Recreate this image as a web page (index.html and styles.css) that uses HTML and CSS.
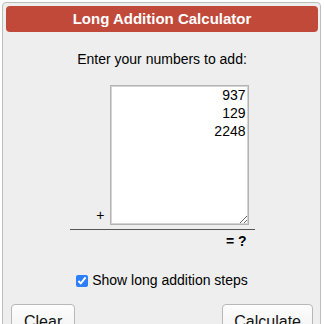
FILE: index.html
```html
<!DOCTYPE html>
<html>
<head>
<meta charset="utf-8">
<link rel="stylesheet" href="styles.css">
</head>
<body>
<div class="panel">
  <div class="header">Long Addition Calculator</div>
  <div class="prompt">Enter your numbers to add:</div>
  <div class="sum">
    <div class="entry">
      <span class="plus">+</span>
      <textarea class="numbers">937
129
2248</textarea>
    </div>
    <div class="rule"></div>
    <div class="result">= ?</div>
  </div>
  <label class="steps"><input type="checkbox" checked> Show long addition steps</label>
  <div class="buttons">
    <button class="btn">Clear</button>
    <button class="btn">Calculate</button>
  </div>
</div>
</body>
</html>
```

FILE: styles.css
```css
html, body {
  margin: 0;
  padding: 0;
  background: #fff;
  font-family: "Liberation Sans", Arial, sans-serif;
  color: #000;
}
.panel {
  margin: 2px 3px 0 2px;
  border: 1px solid #bdbdbd;
  border-radius: 4px;
  background: #eeeeee;
  padding: 3px 2px 20px 3px;
  height: 360px;
  box-sizing: border-box;
}
.header {
  height: 26px;
  line-height: 26px;
  background: #c0493a;
  border-radius: 4px;
  color: #fff;
  font-weight: bold;
  font-size: 15px;
  text-align: center;
}
.prompt {
  margin-top: 19px;
  font-size: 14px;
  line-height: 17px;
  text-align: center;
}
.sum {
  width: 185px;
  margin: 17px auto 0;
}
.entry {
  display: flex;
  align-items: flex-end;
  justify-content: flex-end;
  padding-right: 6px;
}
.plus {
  font-size: 14px;
  line-height: 17px;
  margin-right: 5px;
  margin-bottom: 1px;
}
.numbers {
  width: 139px;
  height: 140px;
  box-sizing: border-box;
  border: 1px solid #b3b3b3;
  box-shadow: inset 0 0 0 1px #d4d4d4;
  background: #fff;
  font-family: "Liberation Sans", Arial, sans-serif;
  font-size: 14px;
  line-height: 18px;
  text-align: right;
  padding: 0 2px;
  margin: 0;
  resize: both;
  outline: none;
  display: block;
}
.rule {
  margin-top: 4px;
  border-top: 1px solid #555;
}
.result {
  text-align: right;
  padding-right: 8px;
  font-weight: bold;
  font-size: 14px;
  line-height: 17px;
  margin-top: 3px;
}
.steps {
  display: flex;
  align-items: center;
  justify-content: center;
  margin-top: 22px;
  font-size: 14px;
  line-height: 17px;
}
.steps input {
  width: 12px;
  height: 12px;
  margin: 0 4px 0 0;
  accent-color: #2d7ff9;
}
.buttons {
  display: flex;
  justify-content: space-between;
  margin-top: 15px;
  padding: 0 5px 0 5px;
}
.btn {
  font-family: "Liberation Sans", Arial, sans-serif;
  font-size: 16px;
  height: 36px;
  padding: 0 11px;
  background: linear-gradient(#fdfdfd, #f0f0f0);
  border: 1px solid #b8b8b8;
  border-radius: 4px;
  color: #111;
}
.btn:first-child {
  padding: 0 12px;
}
```
